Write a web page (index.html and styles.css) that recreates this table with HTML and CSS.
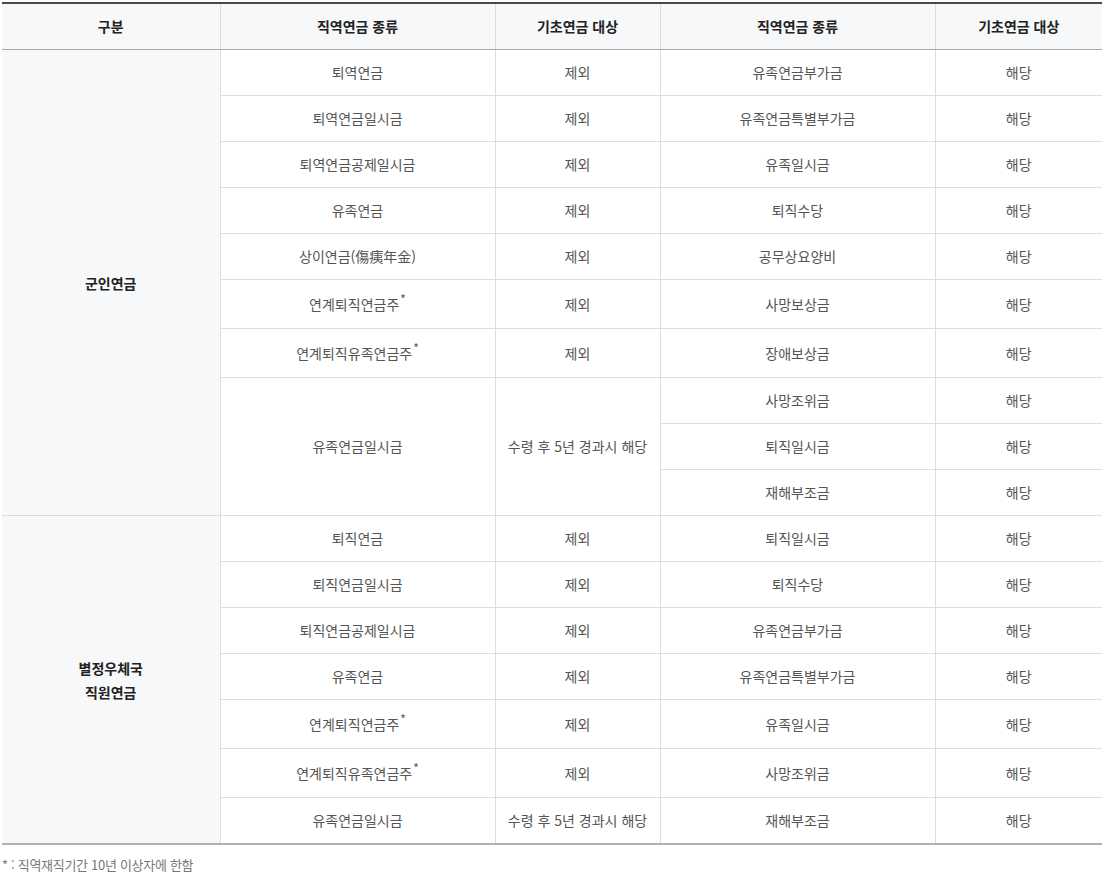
FILE: index.html
```html
<!DOCTYPE html>
<html lang="ko">
<head>
<meta charset="utf-8">
<link rel="stylesheet" href="styles.css">
</head>
<body>
<div class="wrap">
<table class="tbl">
  <colgroup>
    <col class="c1"><col class="c2"><col class="c3"><col class="c4"><col class="c5">
  </colgroup>
  <thead>
    <tr>
      <th>구분</th><th>직역연금 종류</th><th>기초연금 대상</th><th>직역연금 종류</th><th>기초연금 대상</th>
    </tr>
  </thead>
  <tbody>
    <tr><td class="grp" rowspan="10">군인연금</td><td>퇴역연금</td><td>제외</td><td>유족연금부가금</td><td>해당</td></tr>
    <tr><td>퇴역연금일시금</td><td>제외</td><td>유족연금특별부가금</td><td>해당</td></tr>
    <tr><td>퇴역연금공제일시금</td><td>제외</td><td>유족일시금</td><td>해당</td></tr>
    <tr><td>유족연금</td><td>제외</td><td>퇴직수당</td><td>해당</td></tr>
    <tr><td>상이연금(傷痍年金)</td><td>제외</td><td>공무상요양비</td><td>해당</td></tr>
    <tr class="tall"><td>연계퇴직연금주<sup>*</sup></td><td>제외</td><td>사망보상금</td><td>해당</td></tr>
    <tr class="tall"><td>연계퇴직유족연금주<sup>*</sup></td><td>제외</td><td>장애보상금</td><td>해당</td></tr>
    <tr><td rowspan="3">유족연금일시금</td><td rowspan="3">수령 후 5년 경과시 해당</td><td>사망조위금</td><td>해당</td></tr>
    <tr><td>퇴직일시금</td><td>해당</td></tr>
    <tr><td>재해부조금</td><td>해당</td></tr>
    <tr><td class="grp" rowspan="7">별정우체국<br>직원연금</td><td>퇴직연금</td><td>제외</td><td>퇴직일시금</td><td>해당</td></tr>
    <tr><td>퇴직연금일시금</td><td>제외</td><td>퇴직수당</td><td>해당</td></tr>
    <tr><td>퇴직연금공제일시금</td><td>제외</td><td>유족연금부가금</td><td>해당</td></tr>
    <tr><td>유족연금</td><td>제외</td><td>유족연금특별부가금</td><td>해당</td></tr>
    <tr class="tall"><td>연계퇴직연금주<sup>*</sup></td><td>제외</td><td>유족일시금</td><td>해당</td></tr>
    <tr class="tall"><td>연계퇴직유족연금주<sup>*</sup></td><td>제외</td><td>사망조위금</td><td>해당</td></tr>
    <tr><td>유족연금일시금</td><td>수령 후 5년 경과시 해당</td><td>재해부조금</td><td>해당</td></tr>
  </tbody>
</table>
<p class="note">* : 직역재직기간 10년 이상자에 한함</p>
</div>
</body>
</html>
```
FILE: styles.css
```css
html, body {
  margin: 0;
  padding: 0;
  background: #fff;
}
body {
  font-family: "Noto Sans CJK KR", "Noto Sans", sans-serif;
  color: #555;
}
.wrap {
  padding: 2px 2px 0 2px;
}
.tbl {
  width: 1100px;
  border-collapse: collapse;
  table-layout: fixed;
  border-top: 2px solid #4b4b4b;
  border-bottom: 2px solid #b1b1b1;
  font-size: 14px;
}
.c1 { width: 218px; }
.c2 { width: 275px; }
.c3 { width: 165px; }
.c4 { width: 275px; }
.c5 { width: 167px; }
.tbl th {
  background: #f7f8fa;
  color: #222;
  font-weight: 700;
  height: 45px;
  padding: 0 8px;
  line-height: 21px;
  text-align: center;
  border-left: 1px solid #dddddd;
  border-bottom: 1px solid #a8a8a8;
}
.tbl td {
  height: 45px;
  padding: 0 8px;
  line-height: 21px;
  text-align: center;
  border-left: 1px solid #dddddd;
  border-top: 1px solid #dddddd;
  color: #555;
}
.tbl th:first-child,
.tbl td.grp {
  border-left: none;
}
.tbl tbody tr:first-child td {
  border-top: none;
}
.tbl td.grp {
  background: #f7f8fa;
  color: #222;
  font-weight: 700;
  line-height: 24px;
}
.tbl tr.tall td {
  height: 48px;
}
.tbl sup {
  font-size: 12px;
  line-height: 0;
  vertical-align: 6px;
  margin-left: 1px;
}
.note {
  margin: 10px 0 0 0;
  font-size: 13px;
  color: #777;
  letter-spacing: -0.3px;
}
```
